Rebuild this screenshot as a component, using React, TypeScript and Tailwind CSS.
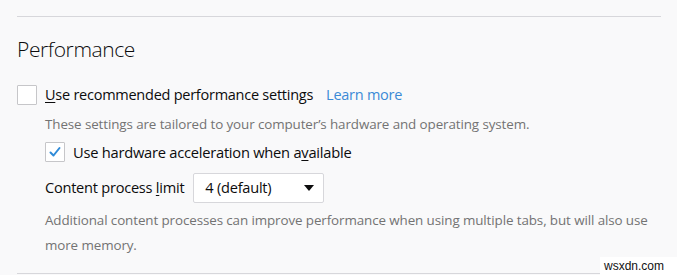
import React from "react";

function Check() {
  return (
    <svg width="14" height="14" viewBox="0 0 14 14" fill="none">
      <path d="M2.5 7.5 L5.5 10.5 L11.5 3" stroke="#2f8bd8" strokeWidth="2" strokeLinecap="round" strokeLinejoin="round" />
    </svg>
  );
}

export default function App() {
  return (
    <div
      className="relative w-[677px] h-[275px] overflow-hidden bg-[#f9f9fa] text-[#0c0c0d]"
      style={{ fontFamily: '"Open Sans", "Noto Sans", sans-serif' }}
    >
      <div className="pt-[16px] pl-[17px] w-[661px]">
        <div className="border-t border-[#d7d7db]" />
        <h1 className="mt-[17px] text-[21px] leading-[30px] font-light tracking-[-0.4px]">Performance</h1>
        <div className="mt-[21px] flex items-center h-[20px]">
          <div className="w-[20px] h-[20px] border border-[#c6c6c9] bg-white rounded-[1px]" />
          <span className="ml-[8px] text-[14.5px] tracking-[-0.25px]">
            <span className="underline underline-offset-2">U</span>se recommended performance settings
          </span>
          <span className="ml-[13px] text-[14.5px] text-[#3b8ad6] tracking-[-0.25px]">Learn more</span>
        </div>
        <div className="ml-[28px] mt-[10px] text-[13.4px] leading-[18px] text-[#737373] tracking-[-0.1px]">
          These settings are tailored to your computer’s hardware and operating system.
        </div>
        <div className="ml-[28px] mt-[9px] flex items-center h-[20px]">
          <div className="w-[20px] h-[20px] border border-[#c6c6c9] bg-white rounded-[1px] flex items-center justify-center">
            <Check />
          </div>
          <span className="ml-[8px] text-[14.7px] tracking-[-0.25px]">
            Use hardware acceleration when a<span className="underline underline-offset-2">v</span>ailable
          </span>
        </div>
        <div className="ml-[28px] mt-[11px] flex items-center">
          <span className="text-[14.6px] tracking-[-0.25px]">
            Content process <span className="underline underline-offset-2">l</span>imit
          </span>
          <div className="ml-[9px] w-[131px] h-[30px] border border-[#d7d7db] bg-white rounded-[2px] flex items-center justify-between pl-[11px] pr-[9px]">
            <span className="text-[14.6px] tracking-[-0.25px]">4 (default)</span>
            <svg width="10" height="6" viewBox="0 0 10 6">
              <path d="M0 0 L10 0 L5 6 Z" fill="#0c0c0d" />
            </svg>
          </div>
        </div>
        <div className="ml-[28px] mt-[5px] text-[13.4px] leading-[25px] text-[#737373] tracking-[-0.1px] w-[605px]">
          Additional content processes can improve performance when using multiple tabs, but will also use more memory.
        </div>
      </div>
      <div className="absolute left-[17px] top-[273px] w-[644px] border-t border-[#d7d7db]" />
      <div
        className="absolute left-[600px] top-[257px] w-[77px] h-[18px] bg-white text-[12px] leading-[18px] pl-[4px] text-[#111]"
        style={{ fontFamily: '"Liberation Sans", sans-serif' }}
      >
        wsxdn.com
      </div>
    </div>
  );
}
